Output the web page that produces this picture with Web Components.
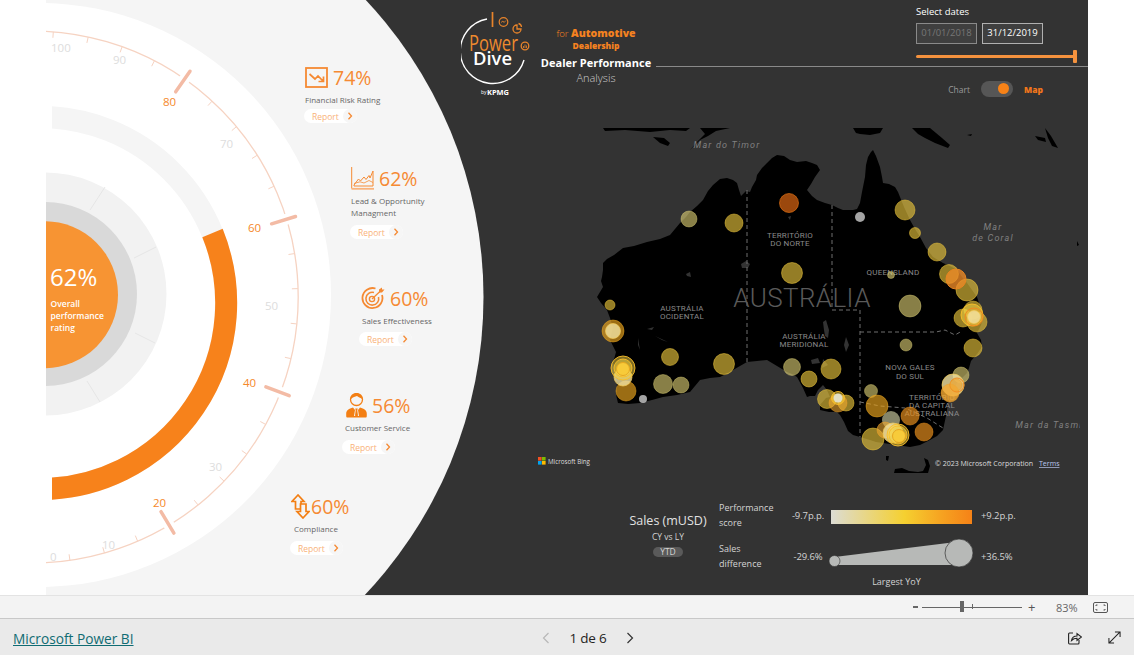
<!DOCTYPE html>
<html lang="en"><head><meta charset="utf-8"><title>Dealer Performance</title>
<style>
html,body{margin:0;padding:0;background:#fff}
body{width:1134px;height:655px;overflow:hidden;font-family:"Open Sans","Noto Sans",sans-serif;display:flex;flex-direction:column}
</style></head><body>
<pd-report>
  <pd-gauge></pd-gauge>
  <pd-kpi style="left:258px;top:66px;--bm:3px" value="74%" label="Financial Risk Rating" icon="risk"></pd-kpi>
  <pd-kpi style="left:304px;top:167px" value="62%" label="Lead &amp; Opportunity Managment" icon="lead" wrap></pd-kpi>
  <pd-kpi style="left:313px;top:287px;--bm:5px;--tl:2px" value="60%" label="Sales Effectiveness" icon="target" indent="3"></pd-kpi>
  <pd-kpi style="left:296px;top:394px" value="56%" label="Customer Service" icon="person" indent="3"></pd-kpi>
  <pd-kpi style="left:244px;top:495px" value="60%" label="Compliance" icon="arrows" indent="4"></pd-kpi>
  <pd-panel>
    <pd-header></pd-header>
    <pd-map></pd-map>
    <pd-legend></pd-legend>
  </pd-panel>
</pd-report>
<pd-zoombar></pd-zoombar>
<pd-footer></pd-footer>
<script>
const el=(h)=>{const t=document.createElement('template');t.innerHTML=h;return t};
class Base extends HTMLElement{constructor(){super();this.attachShadow({mode:'open'}).appendChild(this.constructor.tpl.content.cloneNode(true))}}

class Report extends Base{static tpl=el(`<style>
:host{display:block;position:relative;height:595px;width:1134px;flex:none;overflow:hidden;background:#fff}
.c{position:absolute;left:46px;top:0;width:1042px;height:595px;background:#333;overflow:hidden}
</style><div class="c"><slot></slot></div>`)}

class Gauge extends Base{static tpl=el(`<style>
:host{position:absolute;left:0;top:0;width:1042px;height:595px;display:block}
svg{display:block;font-family:"Open Sans","Noto Sans",sans-serif}
</style><svg width="1042" height="595" viewBox="46 0 1042 595">
<defs><clipPath id="r"><rect x="52" y="0" width="400" height="595"/></clipPath></defs>
<circle cx="50" cy="297" r="433.5" fill="#f5f5f5"/>
<circle cx="39" cy="295" r="292" fill="#fff"/>
<g id="ticks"></g>
<g clip-path="url(#r)" fill="none" stroke-width="22">
<circle cx="40" cy="303" r="186" stroke="#f5f5f5"/>
<path d="M212.500 233A186 186 0 0 1 40 489" stroke="#f7821b"/>
</g>
<circle cx="45" cy="294" r="121.500" fill="#f2f2f2"/>
<g stroke="#e2e2e2" stroke-width=".8"><path d="M105 187L90 210M156 247L134 258M135 333L155 343M87 381L100 402"/></g>
<circle cx="45" cy="294" r="92" fill="#d9d9d9"/>
<circle cx="44.500" cy="294.700" r="73.500" fill="#f79433"/>
<text x="50" y="286" font-size="24" fill="#fff">62%</text>
<g font-size="8.500" font-weight="600" fill="#fff"><text x="50.500" y="307">Overall</text><text x="50.500" y="319">performance</text><text x="50.500" y="331">rating</text></g>
<g id="labels" font-size="11.500"></g>
</svg>`);
connectedCallback(){
 const s=this.shadowRoot,cx=32,cy=297,R=266;let t='';
 const p=(v,r)=>{const a=((50-v)*1.9+2)*Math.PI/180;return[(cx+r*Math.cos(a)).toFixed(1),(cy+r*Math.sin(a)).toFixed(1)]};
 const a0=p(102,R),a1=p(0,R);
 t+=`<path d="M${a0}A${R} ${R} 0 1 1 ${a1}" fill="none" stroke="#f6d3c2" stroke-width="1.300"/>`;
 for(let v=0;v<=100;v+=4){ if(v%20==0&&v>0&&v<100)continue; const a=p(v,R),b=p(v,R-6);t+=`<path d="M${a}L${b}" stroke="#f6d3c2" stroke-width="1"/>`}
 for(const v of[80,60,40,20]){const a=p(v,250.500),b=p(v,275.500),c=p(v,260),d=p(v,272);
  t+=`<path d="M${c}L${d}" stroke="#fff" stroke-width="11"/><path d="M${a}L${b}" stroke="#f3bba5" stroke-width="3.500" stroke-linecap="round"/>`}
 s.getElementById('ticks').innerHTML=t;
 const L=[[100,51,52,'#ddd'],[90,113,64,'#ddd'],[80,163,106,'#f5882a'],[70,220,148,'#ddd'],[60,248,232,'#f5882a'],[50,265,310,'#ddd'],[40,243,387,'#f5882a'],[30,209,471,'#ddd'],[20,153,507,'#f5882a'],[10,102,549,'#ddd'],[0,50,561,'#ddd']];
 s.getElementById('labels').innerHTML=L.map(l=>`<text x="${l[1]}" y="${l[2]}" fill="${l[3]}">${l[0]}</text>`).join('');
}}

const ICONS={
risk:`<svg width="23" height="21" viewBox="0 0 23 21" fill="none" stroke="#f58a33"><rect x="1" y="1" width="21" height="19" stroke-width="1.800"/><path d="M4.500 7L10 12L13 9L18.500 14.500M18.500 9.500V14.500H13.500" stroke-width="1.700"/></svg>`,
lead:`<svg width="23" height="23" viewBox="0 0 23 23" fill="none" stroke="#f58a33"><path d="M.7 0V21.500" stroke-width="1"/><path d="M.5 21.800H23" stroke-width="1.800" stroke="#f9b27a"/><path d="M3 18L7.500 12L9.500 14L13 10L15 12.500L18 8.500L19 11L22 4V19H3Z" stroke-width="1"/><path d="M3 16.500L9 14.800L13 16L18 13.500L22 15.500" stroke-width=".8"/></svg>`,
target:`<svg width="24" height="23" viewBox="0 0 24 23" fill="none" stroke="#f58a33"><path d="M14.500 1.500A10 10 0 1 0 21 8" stroke-width="1.800"/><path d="M13 5.500A6.400 6.400 0 1 0 17.500 10" stroke-width="1.600"/><circle cx="11" cy="12" r="2.600" stroke-width="1.400"/><path d="M11 12L20 3.500" stroke-width="1.300"/><path d="M18 2.500V5.500H21L23.500 2.500H21V.5Z" fill="#f58a33" stroke="none"/></svg>`,
person:`<svg width="21" height="25" viewBox="0 0 21 25" style="margin-left:3px"><circle cx="10.500" cy="6.500" r="6" fill="none" stroke="#f37f14" stroke-width="1.300"/><path d="M5 6C7 4 9 3.500 11 3C13 4.500 15 5 16 6C16.500 2 13 .5 10.500 .5C7 .5 4.500 3 5 6Z" fill="#f37f14"/><path d="M1 24.500H20C20.800 24.500 20.800 23.500 20.800 21C20.800 17 18 15.500 14 14.500L12 17L13 23H8L9 17L7 14.500C3 15.500 .2 17 .2 21C.2 23.500 .2 24.500 1 24.500Z" fill="#f37f14"/><path d="M9.300 15.500H11.700L11.300 17.500L12 22.500L10.500 24L9 22.500L9.700 17.500Z" fill="#f37f14"/></svg>`,
arrows:`<svg width="19" height="25" viewBox="0 0 19 25" fill="none" stroke="#f37f14" stroke-width="1.700" style="margin-right:-4px"><path d="M7 1L1 7.500H4.500V15H10V7.500H13Z"/><path d="M12 24L18 17.500H15V10H9.500V17.500H6Z" fill="#f5f5f5"/></svg>`};

class Kpi extends Base{static tpl=el(`<style>
:host{position:absolute;display:flex;flex-direction:column;align-items:flex-start;width:120px;color:#f58a33}
.top{display:flex;align-items:center;height:23px;gap:5px;margin-left:var(--tl,1px)}
.v{font-size:19.500px;line-height:23px}
.l{font-size:8px;line-height:12px;color:#666;margin:5px 0 0 1px;width:82px}
:host(:not([wrap])) .l{white-space:nowrap;width:auto}
.b{margin-top:var(--bm,6px);width:53px;height:14px;border-radius:7px;background:#fff;display:flex;align-items:center;justify-content:space-between;font-size:8.500px;color:#f9b27a;padding-left:8px;box-sizing:border-box}
.b i{width:14px;height:14px;border-radius:50%;background:#f6f6f6;display:flex;align-items:center;justify-content:center}
</style><div class="top"><span id="ic" style="display:flex"></span><span class="v" id="v"></span></div><div class="l" id="l"></div>
<div class="b">Report<i><svg width="6" height="8" viewBox="0 0 6 8" fill="none" stroke="#f58a33" stroke-width="1.300"><path d="M1.500 .8L4.500 4L1.500 7.200"/></svg></i></div>`);
connectedCallback(){const s=this.shadowRoot;s.getElementById('v').textContent=this.getAttribute('value');s.getElementById('l').textContent=this.getAttribute('label');s.getElementById('ic').innerHTML=ICONS[this.getAttribute('icon')];
 const i=this.getAttribute('indent');if(i)s.getElementById('l').style.marginLeft=i+'px';}}

class Panel extends Base{static tpl=el(`<style>
:host{position:absolute;left:0;top:0;width:1042px;height:595px;display:flex;flex-direction:column;padding-left:415px;box-sizing:border-box}
</style><slot></slot>`)}

class Header extends Base{static tpl=el(`<style>
:host{display:flex;align-items:flex-start;height:98px;color:#fff;flex:none}
.logo{width:79px;height:98px;flex:none;display:block}
.t{width:112px;text-align:center;flex:none;padding-top:27px;box-sizing:border-box}
.a{font-size:10.500px;line-height:12px;font-weight:800;color:#f58220;white-space:nowrap}.a span{font-weight:300;font-size:9.500px}
.d{font-size:8.500px;line-height:11px;font-weight:800;color:#f58220;margin-bottom:5px}
.p{font-size:11px;line-height:14px;font-weight:700;white-space:nowrap}
.n{font-size:11px;line-height:15px;font-weight:300;color:#ccc}
.r{flex:1;margin-left:4px}
.dt{border-bottom:1px solid #8a8a8a;padding:5px 0 0 260px;height:61px}
.s{font-size:9.500px;line-height:14px;color:#fff;margin-bottom:4px}
.row{display:flex;gap:5px}
.i{width:61px;height:21px;box-sizing:border-box;border:1.500px solid #b0b0b0;background:#3f3f3f;font-size:9.500px;line-height:18px;text-align:center;white-space:nowrap}
.i.o{border-color:#8a8a8a;color:#777}
.sl{position:relative;margin-top:11px;height:3px;width:161px;background:#f5923e;border-radius:2px}
.sl b{position:absolute;right:0;top:-5px;width:4px;height:13px;background:#f5923e;border-radius:1px}
.tg{display:flex;justify-content:flex-end;align-items:center;gap:11px;padding:14px 45px 0 0;font-size:8.500px}
.tg .c{color:#9a9a9a}.tg .m{color:#f2761b;font-weight:800}
.sw{width:32px;height:16px;border-radius:8px;background:#565656;position:relative}
.sw b{position:absolute;right:4px;top:2px;width:11px;height:11px;border-radius:50%;background:#f78217}
</style>
<svg class="logo" viewBox="461 0 79 98" fill="none">
<path d="M487 19A32.500 32.500 0 1 0 524 60" stroke="#fff" stroke-width="1.400"/>
<path d="M492.500 12V27" stroke="#e8842b" stroke-width="1.700"/>
<circle cx="503.500" cy="22" r="4.300" stroke="#e8842b" stroke-width="1.200"/><path d="M501 22.500L503 21L504 22.500L506 20.500" stroke="#e8842b" stroke-width=".8"/>
<path d="M517 25A4 4 0 1 0 521 29H517Z" stroke="#e8842b" stroke-width="1.300"/><path d="M518.500 23.500A4 4 0 0 1 521.500 27" stroke="#e8842b" stroke-width="1.300"/>
<circle cx="525" cy="46" r="3.800" stroke="#e8842b" stroke-width="1.300"/><path d="M523.500 48V46M525 48V44.500M526.500 48V45.500" stroke="#e8842b" stroke-width=".8"/>
<text x="469" y="51" font-size="22" font-weight="400" fill="#ef8a2e" style="font-family:'Open Sans',sans-serif" textLength="49" lengthAdjust="spacingAndGlyphs">Power</text>
<text x="473" y="65" font-size="18" font-weight="600" fill="#fff" style="font-family:'Open Sans',sans-serif" textLength="39" lengthAdjust="spacingAndGlyphs">Dive</text>
<text x="481" y="94" font-size="5" fill="#fff" style="font-family:'Open Sans',sans-serif">by</text>
<text x="487" y="94.500" font-size="7" font-weight="700" fill="#fff" style="font-family:'Open Sans',sans-serif" textLength="22" lengthAdjust="spacingAndGlyphs">KPMG</text>
</svg>
<div class="t"><div class="a"><span>for </span>Automotive</div><div class="d">Dealership</div><div class="p">Dealer Performance</div><div class="n">Analysis</div></div>
<div class="r"><div class="dt"><div class="s">Select dates</div><div class="row"><div class="i o">01/01/2018</div><div class="i">31/12/2019</div></div><div class="sl"><b></b></div></div>
<div class="tg"><span class="c">Chart</span><span class="sw"><b></b></span><span class="m">Map</span></div></div>`)}

const LAND="M603 263L607 259L614 255L623 248L634 246L647 242L660 239L670 235L675 229L680 223L686 217L690 212L697 206L703 200L708 191L713 185L720 179L727 178L733 180L737 183L739 190L741 196L746 191L750 192L752 187L756 180L757 175L762 168L767 163L772 158L777 155L784 156L790 160L797 162L806 161L812 163L817 165L820 170L815 177L811 184L807 190L812 196L817 200L825 203L832 205L838 208L843 210L853 210L857 209L860 203L862 192L865 177L866 165L868 157L871 152L873 150L876 156L880 167L882 177L883 183L889 184L895 187L898 192L900 197L904 207L910 220L915 229L920 237L926 248L933 257L938 260L943 263L950 266L957 270L962 277L967 283L972 290L977 297L980 306L983 317L981 325L977 333L981 340L982 347L977 354L971 361L969 368L967 373L962 378L957 383L952 393L948 403L946 416L943 430L937 436L930 440L920 445L910 447L897 445L883 443L876 442L870 440L860 437L853 435L848 431L844 422L840 415L837 412L829 412L820 410L820 405L826 398L830 397L827 390L823 385L818 390L815 396L810 396L807 397L803 388L797 377L792 374L787 372L777 366L767 360L757 361L747 362L740 366L733 370L726 374L720 377L710 378L700 380L695 386L690 392L677 395L663 397L652 400L640 403L628 404L618 403L616 395L617 387L616 375L613 363L616 352L610 340L613 327L610 318L607 310L601 303L597 297L600 292L603 287L601 281L602 277L603 270Z";
const BUB=[
[610,305,5,'a'],[689,219,8,'p'],[734,223,9,'a'],[789,203,9.500,'br'],[792,273,10.500,'a'],
[860,217,5,'g'],[905,210,10,'a'],[915,233,5.500,'a'],[937,252,9,'a'],[949,274,9.500,'a'],[967,290,11,'a'],[956,279,10,'o'],[891,275,3.500,'p'],[910,306,11,'p'],
[973,310,9,'a'],[963,318,9,'a'],[977,322,10,'a'],[972,315,11,'y'],[974,317,9,'oo'],[974,317,6.500,'l'],[906,345,6,'p'],[973,348,9,'a'],
[613,331,11,'b'],[613,331,7.500,'l'],[626,391,10,'b'],[623,377,9,'l'],[623,368,12,'y'],[623,368,9,'y'],[623,369,6.500,'yy'],[670,357,8.500,'a'],[724,364,10.500,'a'],[663,384,9.500,'p'],[681,385,8,'p'],[643,399,4,'g'],
[792,367,8.500,'p'],[809,379,8,'a'],[831,369,10,'a'],[827,399,9.500,'a'],[846,403,8,'a'],[838,403,9,'o2'],[838,398,6.500,'y'],[838,398,4.500,'g2'],
[871,391,6.500,'p'],[877,406,11,'b'],[873,439,11,'a'],[891,420,9,'q'],[885,430,8,'o2'],[893,433,10,'l'],[898,435,11,'y'],[898,435,9,'y'],[899,436,6.500,'yy'],[910,416,9,'br2'],[924,432,9,'br2'],
[961,375,8,'p'],[953,385,11,'l'],[950,393,9,'o3'],[957,385,7,'oo'],[956,385,6,'o2']];
const COL={a:['rgba(232,196,60,.64)','rgba(240,200,60,.5)'],p:['rgba(220,205,115,.62)','rgba(225,212,120,.4)'],br:['rgba(235,110,20,.66)','rgba(240,120,20,.6)'],g:['rgba(205,205,205,.8)','none'],b:['rgba(235,165,30,.66)','rgba(235,165,30,.5)'],y:['rgba(250,215,70,.5)','rgba(250,190,40,.9)'],yy:['#f7cb3a','#e8a820'],oo:['rgba(240,150,50,.25)','#f08a20'],o:['rgba(240,140,40,.78)','#e88420'],o2:['rgba(240,170,50,.6)','rgba(240,160,40,.5)'],o3:['rgba(245,170,50,.8)','rgba(240,160,40,.5)'],l:['rgba(240,225,160,.82)','rgba(245,205,90,.7)'],g2:['rgba(225,225,205,.95)','none'],q:['rgba(190,190,150,.7)','none'],br2:['rgba(235,145,30,.68)','rgba(235,145,30,.5)']};

class PdMap extends Base{static tpl=el(`<style>
:host{display:block;height:345px;margin:30px 0 0 75px;flex:none}
svg{display:block;font-family:Roboto,"Open Sans",sans-serif}
</style><svg width="552" height="345" viewBox="536 128 552 345">
<defs><clipPath id="mc"><rect x="536" y="128" width="544" height="345"/></clipPath></defs>
<g clip-path="url(#mc)">
<g fill="#000">
<path d="M603 128H690L686 131L670 130L650 132L625 130L605 131Z"/>
<path d="M653 137L664 138L670 143L668 146L660 143Z"/>
<path d="M690 150L700 140L708 136L716 131L730 128H700L705 134L697 142Z"/>
<path d="M853 128H883L880 133L870 135L860 134L856 133Z"/>
<path d="M912 128H930L942 138L950 145L948 148L935 143L925 138L918 134Z"/>
<path d="M1035 136L1045 138L1046 142L1038 140Z"/><path d="M1045 128L1051 136L1058 148L1052 146L1048 138Z"/>
<path d="M967 135L972 134L971 136ZM1077 241L1079 245L1077 246Z"/>
<path d="${LAND}"/>
<path d="M886 456L889 456L888 461L886 460ZM894 473L895 469L902 468L909 471L918 472L923 471L926 465L924 458L928 460L930 466L928 473Z"/>
</g>
<g fill="#333">
<path d="M741 264L746 261L750 264L748 268L742 268ZM686 274L690 272L691 277L687 276ZM788 217L791 216L790 220ZM823 322L826 320L829 330L828 338L825 336L824 330ZM846 337L849 345L846 352L844 345ZM823 359L828 365L822 368ZM811 360L818 358L820 363L812 364ZM647 329L654 327L652 330ZM655 336L668 342L662 340ZM638 338L640 350L638 345Z"/>
</g>
<g fill="none" stroke="#6e6e6e" stroke-width="1" stroke-dasharray="4 3">
<path d="M747 190V362M832 205V310H860V437M860 332H936L945 330L955 335L962 331M860 402L880 406L905 408L927 418L943 428"/>
</g>
<g fill="#8a8a8a" font-size="8" text-anchor="middle" letter-spacing=".2">
<text x="790" y="238">TERRITÓRIO</text><text x="790" y="246">DO NORTE</text>
<text x="893" y="275">QUEENSLAND</text>
<text x="682" y="311">AUSTRÁLIA</text><text x="682" y="319">OCIDENTAL</text>
<text x="804" y="339">AUSTRÁLIA</text><text x="804" y="347">MERIDIONAL</text>
<text x="910" y="370">NOVA GALES</text><text x="910" y="379">DO SUL</text>
<text x="932" y="400">TERRITÓRIO</text><text x="932" y="408">DA CAPITAL</text><text x="932" y="416">AUSTRALIANA</text>
</g>
<text x="802" y="307" font-size="26" fill="#5a5a5a" text-anchor="middle" letter-spacing=".4" font-weight="300">AUSTRÁLIA</text>
<g fill="#808080" font-size="9" font-style="italic" letter-spacing="1.200" text-anchor="middle">
<text x="727" y="148">Mar do Timor</text><text x="993" y="230">Mar</text><text x="993" y="241">de Coral</text><text x="1049" y="428">Mar da Tasmi</text></g>
<g id="b"></g>
</g>
<g><rect x="538" y="457" width="3.600" height="3.600" fill="#f25022"/><rect x="542" y="457" width="3.600" height="3.600" fill="#7fba00"/><rect x="538" y="461" width="3.600" height="3.600" fill="#00a4ef"/><rect x="542" y="461" width="3.600" height="3.600" fill="#ffb900"/>
<text x="548" y="464" font-size="7" fill="#ddd" style="font-family:'Open Sans',sans-serif" textLength="42" lengthAdjust="spacingAndGlyphs">Microsoft Bing</text>
<text x="935" y="466" font-size="7" fill="#ddd" style="font-family:'Open Sans',sans-serif" textLength="98" lengthAdjust="spacingAndGlyphs">© 2023 Microsoft Corporation</text>
<text x="1039" y="466" font-size="7" fill="#b9c6f0" text-decoration="underline" style="font-family:'Open Sans',sans-serif">Terms</text></g>
</svg>`);
connectedCallback(){this.shadowRoot.getElementById('b').innerHTML=BUB.map(b=>{const c=COL[b[3]];return`<circle cx="${b[0]}" cy="${b[1]}" r="${b[2]}" fill="${c[0]}" stroke="${c[1]}"/>`}).join('')}}

class Legend extends Base{static tpl=el(`<style>
:host{display:flex;height:100px;margin-top:27px;flex:none;color:#d4d4d4;font-size:9px;position:relative}
.sales{width:96px;margin-left:159px;text-align:center;padding-top:12px;flex:none}
.sales h3{font-size:12.500px;line-height:18px;font-weight:400;margin:0;color:#e2e2e2;white-space:nowrap}
.sales p{margin:0;line-height:14px;font-size:8.500px}
.pill{display:inline-block;width:30px;height:10px;line-height:10px;background:#5a5a5a;border-radius:5px;font-size:8.500px;margin-top:3px}
.g{margin-left:3px;display:grid;grid-template-columns:69px 43px 141px 45px;align-items:center;align-content:start;row-gap:9px}
.n{line-height:15px;font-size:9px}
.v{white-space:nowrap;font-size:9.500px;text-align:center;margin-right:3px;letter-spacing:-.1px}
.v.r{text-align:left;margin:0 0 0 9px}
.bar{height:14px;background:linear-gradient(90deg,#dcdcd4,#f5d030 52%,#f6a321 78%,#f58217);margin-top:4px}
.sh{height:34px;display:block;overflow:visible}
.yy{grid-column:3;text-align:center;font-size:9px;margin:-6px 10px 0 0;line-height:12px}
</style>
<div class="sales"><h3>Sales (mUSD)</h3><p>CY vs LY</p><span class="pill">YTD</span></div>
<div class="g"><div class="n">Performance<br>score</div><div class="v">-9.7p.p.</div><div class="bar"></div><div class="v r">+9.2p.p.</div>
<div class="n">Sales<br>difference</div><div class="v">-29.6%</div>
<svg class="sh" width="141" height="34" viewBox="0 0 141 34"><path d="M3.500 18L125 3V26H3.500Z" fill="#b7b9b7"/><circle cx="3.500" cy="22" r="5.500" fill="#b7b9b7" stroke="#333" stroke-width=".6"/><circle cx="128" cy="14" r="14" fill="#b7b9b7" stroke="#333" stroke-width=".7"/></svg>
<div class="v r">+36.5%</div><div class="yy">Largest YoY</div></div>`)}

class ZoomBar extends Base{static tpl=el(`<style>
:host{display:flex;align-items:center;flex:none;background:#f3f3f3;border-top:1px solid #e3e3e3;border-bottom:1px solid #c8c8c8;height:22px;color:#555;font-size:12px}
.m{margin-left:913px;width:5px;height:2px;background:#666}
.tr{position:relative;width:100px;height:1px;background:#666;margin-left:4px}
.tr b{position:absolute;left:38px;top:-6px;width:4px;height:11px;background:#666}.tr i{position:absolute;left:50px;top:-3px;width:1px;height:5px;background:#666}
.p{margin-left:6px;font-size:13px;color:#555;width:9px}
.pc{margin-left:19px;width:34px;font-size:11px;color:#666}
svg{margin-left:3px;display:block}
</style><span class="m"></span><div class="tr"><b></b><i></i></div><span class="p">+</span><span class="pc">83%</span>
<svg width="15" height="11" viewBox="0 0 15 11" fill="none" stroke="#555"><rect x=".5" y=".5" width="14" height="10" rx="1.500"/><path d="M3 4V3H4.500M10.500 3H12V4M3 7V8H4.500M10.500 8H12V7"/></svg>`)}

class Footer extends Base{static tpl=el(`<style>
:host{display:grid;grid-template-columns:1fr auto 1fr;align-items:center;height:36px;flex:none;background:#eaeaea;padding:2px 13px 0;box-sizing:border-box;width:1134px}
a{color:#106c73;font-size:13.700px;text-decoration:underline;white-space:nowrap}
.pg{display:flex;align-items:center;gap:19px;font-size:13.500px;color:#252423;margin-left:42px}
.pg span{font-weight:500;letter-spacing:-.2px}
.ic{display:flex;justify-content:flex-end;gap:26px}
svg{display:block}
</style><a href="#">Microsoft Power BI</a>
<div class="pg"><svg width="8" height="12" viewBox="0 0 8 12" fill="none" stroke="#b8b8b8" stroke-width="1.200"><path d="M6.500 1L1.500 6L6.500 11"/></svg><span>1 de 6</span><svg width="8" height="12" viewBox="0 0 8 12" fill="none" stroke="#333" stroke-width="1.200"><path d="M1.500 1L6.500 6L1.500 11"/></svg></div>
<div class="ic"><svg width="14" height="14" viewBox="0 0 14 14" fill="none" stroke="#222" stroke-width="1.100"><path d="M5 2H1.500A1 1 0 0 0 .6 3V12A1 1 0 0 0 1.500 13H10A1 1 0 0 0 11 12V9"/><path d="M3.500 9.500C4 6.500 6 5 9 5V2.500L13.500 6L9 9.500V7.300C6.500 7.300 5 8 3.500 9.500Z"/></svg>
<svg width="13" height="13" viewBox="0 0 14 14" fill="none" stroke="#222" stroke-width="1.100"><path d="M1 13L13 1M7.500 1H13V6.500M1 7.500V13H6.500"/></svg></div>`)}

customElements.define('pd-report',Report);customElements.define('pd-gauge',Gauge);customElements.define('pd-kpi',Kpi);customElements.define('pd-panel',Panel);customElements.define('pd-header',Header);customElements.define('pd-map',PdMap);customElements.define('pd-legend',Legend);customElements.define('pd-zoombar',ZoomBar);customElements.define('pd-footer',Footer);
</script>
</body></html>
